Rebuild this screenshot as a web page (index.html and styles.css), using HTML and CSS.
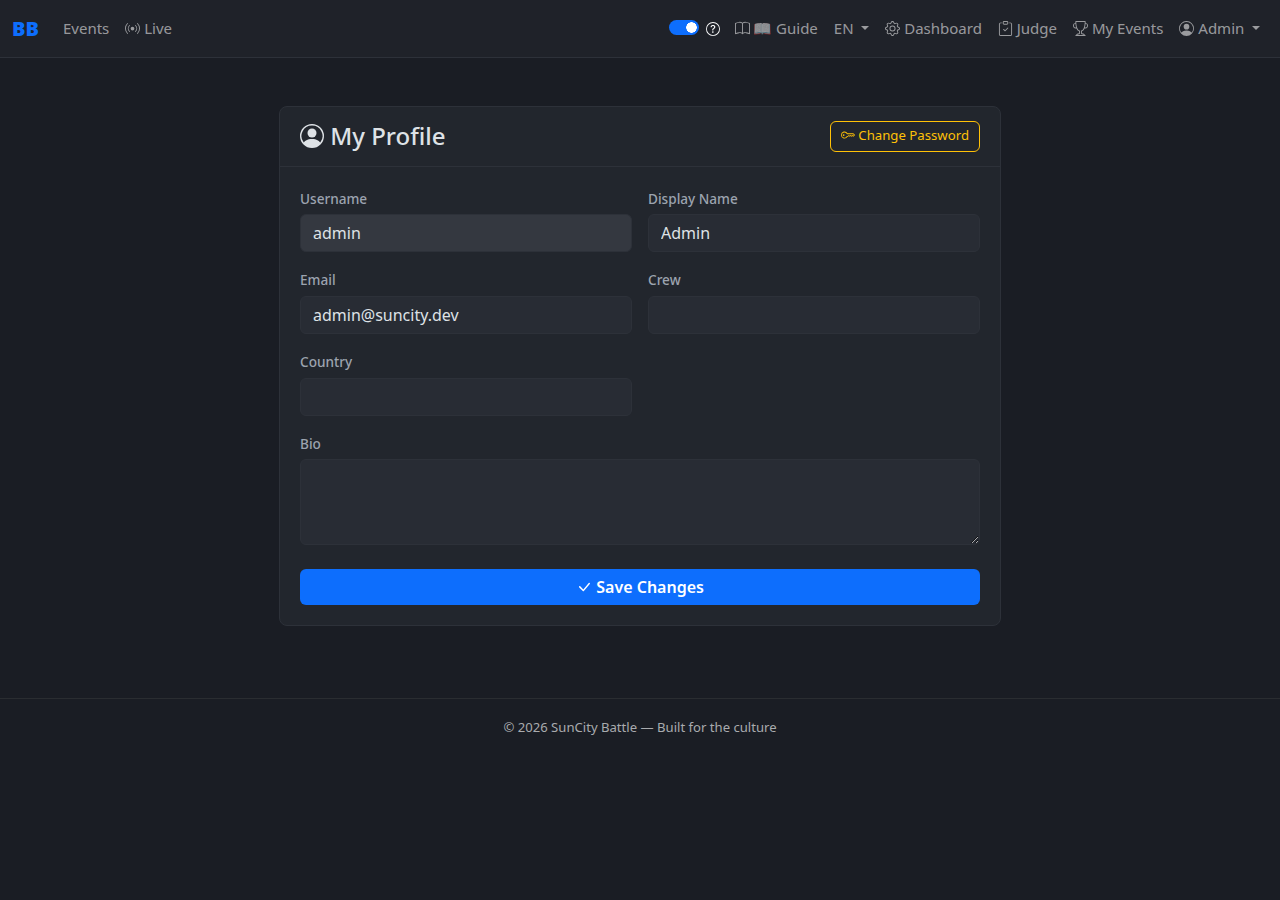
FILE: index.html
```
<!DOCTYPE html>
<html lang="en">
<head>
    <meta charset="UTF-8">
    <meta name="viewport" content="width=device-width, initial-scale=1.0">
    <title>My Profile</title>
    <link rel="stylesheet" href="styles.css">
</head>
<body>

<nav class="navbar">
    <a class="navbar-brand" href="#">BB</a>
    <div class="nav-links">
        <a class="nav-link" href="#">Events</a>
        <a class="nav-link" href="#"><svg class="bi" viewBox="0 0 16 16"><path d="M3.05 3.05a7 7 0 0 0 0 9.9.5.5 0 0 1-.707.707 8 8 0 0 1 0-11.314.5.5 0 0 1 .707.707m2.122 2.122a4 4 0 0 0 0 5.656.5.5 0 1 1-.708.708 5 5 0 0 1 0-7.072.5.5 0 0 1 .708.708m5.656-.708a.5.5 0 0 1 .708 0 5 5 0 0 1 0 7.072.5.5 0 1 1-.708-.708 4 4 0 0 0 0-5.656.5.5 0 0 1 0-.708m2.122-2.12a.5.5 0 0 1 .707 0 8 8 0 0 1 0 11.313.5.5 0 0 1-.707-.707 7 7 0 0 0 0-9.9.5.5 0 0 1 0-.707zM10 8a2 2 0 1 1-4 0 2 2 0 0 1 4 0"/></svg> Live</a>
    </div>

    <div class="nav-links nav-right">
        <div class="help-toggle">
            <input type="checkbox" class="switch" id="helpSwitch" checked>
            <label for="helpSwitch"><svg class="bi" viewBox="0 0 16 16"><path d="M8 15A7 7 0 1 1 8 1a7 7 0 0 1 0 14m0 1A8 8 0 1 0 8 0a8 8 0 0 0 0 16"/><path d="M5.255 5.786a.237.237 0 0 0 .241.247h.825c.138 0 .248-.113.266-.25.09-.656.54-1.134 1.342-1.134.686 0 1.314.343 1.314 1.168 0 .635-.374.927-.965 1.371-.673.489-1.206 1.06-1.168 1.987l.003.217a.25.25 0 0 0 .25.246h.811a.25.25 0 0 0 .25-.25v-.105c0-.718.273-.927 1.01-1.486.609-.463 1.244-.977 1.244-2.056 0-1.511-1.276-2.241-2.673-2.241-1.267 0-2.655.59-2.75 2.286m1.557 5.763c0 .533.425.927 1.01.927.609 0 1.028-.394 1.028-.927 0-.552-.42-.94-1.029-.94-.584 0-1.009.388-1.009.94"/></svg></label>
        </div>
        <a class="nav-link" href="#"><svg class="bi" viewBox="0 0 16 16"><path d="M1 2.828c.885-.37 2.154-.769 3.388-.893 1.33-.134 2.458.063 3.112.752v9.746c-.935-.53-2.12-.603-3.213-.493-1.18.12-2.37.461-3.287.811zm7.5-.141c.654-.689 1.782-.886 3.112-.752 1.234.124 2.503.523 3.388.893v9.923c-.918-.35-2.107-.692-3.287-.81-1.094-.111-2.278-.039-3.213.492zM8 1.783C7.015.936 5.587.81 4.287.94c-1.514.153-3.042.672-3.994 1.105A.5.5 0 0 0 0 2.5v11a.5.5 0 0 0 .707.455c.882-.4 2.303-.881 3.68-1.02 1.409-.142 2.59.087 3.223.877a.5.5 0 0 0 .78 0c.633-.79 1.814-1.019 3.222-.877 1.378.139 2.8.62 3.681 1.02A.5.5 0 0 0 16 13.5v-11a.5.5 0 0 0-.293-.455c-.952-.433-2.48-.952-3.994-1.105C10.413.809 8.985.936 8 1.783"/></svg> 📖 Guide</a>
        <a class="nav-link dropdown-toggle" href="#">EN </a>
        <a class="nav-link" href="#"><svg class="bi" viewBox="0 0 16 16"><path d="M8 4.754a3.246 3.246 0 1 0 0 6.492 3.246 3.246 0 0 0 0-6.492M5.754 8a2.246 2.246 0 1 1 4.492 0 2.246 2.246 0 0 1-4.492 0"/><path d="M9.796 1.343c-.527-1.79-3.065-1.79-3.592 0l-.094.319a.873.873 0 0 1-1.255.52l-.292-.16c-1.64-.892-3.433.902-2.54 2.541l.159.292a.873.873 0 0 1-.52 1.255l-.319.094c-1.79.527-1.79 3.065 0 3.592l.319.094a.873.873 0 0 1 .52 1.255l-.16.292c-.892 1.64.901 3.434 2.541 2.54l.292-.159a.873.873 0 0 1 1.255.52l.094.319c.527 1.79 3.065 1.79 3.592 0l.094-.319a.873.873 0 0 1 1.255-.52l.292.16c1.64.893 3.434-.902 2.54-2.541l-.159-.292a.873.873 0 0 1 .52-1.255l.319-.094c1.79-.527 1.79-3.065 0-3.592l-.319-.094a.873.873 0 0 1-.52-1.255l.16-.292c.893-1.64-.902-3.433-2.541-2.54l-.292.159a.873.873 0 0 1-1.255-.52zm-2.633.283c.246-.835 1.428-.835 1.674 0l.094.319a1.873 1.873 0 0 0 2.693 1.115l.291-.16c.764-.415 1.6.42 1.184 1.185l-.159.292a1.873 1.873 0 0 0 1.116 2.692l.318.094c.835.246.835 1.428 0 1.674l-.319.094a1.873 1.873 0 0 0-1.115 2.693l.16.291c.415.764-.42 1.6-1.185 1.184l-.291-.159a1.873 1.873 0 0 0-2.693 1.116l-.094.318c-.246.835-1.428.835-1.674 0l-.094-.319a1.873 1.873 0 0 0-2.692-1.115l-.292.16c-.764.415-1.6-.42-1.184-1.185l.159-.291A1.873 1.873 0 0 0 1.945 8.93l-.319-.094c-.835-.246-.835-1.428 0-1.674l.319-.094A1.873 1.873 0 0 0 3.06 4.377l-.16-.292c-.415-.764.42-1.6 1.185-1.184l.292.159a1.873 1.873 0 0 0 2.692-1.115z"/></svg> Dashboard</a>
        <a class="nav-link" href="#"><svg class="bi" viewBox="0 0 16 16"><path fill-rule="evenodd" d="M10.854 7.146a.5.5 0 0 1 0 .708l-3 3a.5.5 0 0 1-.708 0l-1.5-1.5a.5.5 0 1 1 .708-.708L7.5 9.793l2.646-2.647a.5.5 0 0 1 .708 0"/><path d="M4 1.5H3a2 2 0 0 0-2 2V14a2 2 0 0 0 2 2h10a2 2 0 0 0 2-2V3.5a2 2 0 0 0-2-2h-1v1h1a1 1 0 0 1 1 1V14a1 1 0 0 1-1 1H3a1 1 0 0 1-1-1V3.5a1 1 0 0 1 1-1h1z"/><path d="M9.5 1a.5.5 0 0 1 .5.5v1a.5.5 0 0 1-.5.5h-3a.5.5 0 0 1-.5-.5v-1a.5.5 0 0 1 .5-.5zm-3-1A1.5 1.5 0 0 0 5 1.5v1A1.5 1.5 0 0 0 6.5 4h3A1.5 1.5 0 0 0 11 2.5v-1A1.5 1.5 0 0 0 9.5 0z"/></svg> Judge</a>
        <a class="nav-link" href="#"><svg class="bi" viewBox="0 0 16 16"><path d="M2.5.5A.5.5 0 0 1 3 0h10a.5.5 0 0 1 .5.5q0 .807-.034 1.536a3 3 0 1 1-1.133 5.89c-.79 1.865-1.878 2.777-2.833 3.011v2.173l1.425.356c.194.048.377.135.537.255L13.3 15.1a.5.5 0 0 1-.3.9H3a.5.5 0 0 1-.3-.9l1.838-1.379c.16-.12.343-.207.537-.255L6.5 13.11v-2.173c-.955-.234-2.043-1.146-2.833-3.012a3 3 0 1 1-1.132-5.89A33 33 0 0 1 2.5.5m.099 2.54a2 2 0 0 0 .72 3.935c-.333-1.05-.588-2.346-.72-3.935m10.083 3.935a2 2 0 0 0 .72-3.935c-.133 1.59-.388 2.885-.72 3.935M3.504 1q.01.775.056 1.469c.13 2.028.457 3.546.87 4.667C5.294 9.48 6.484 10 7 10a.5.5 0 0 1 .5.5v2.61a1 1 0 0 1-.757.97l-1.426.356a.5.5 0 0 0-.179.085L4.5 15h7l-.638-.479a.5.5 0 0 0-.18-.085l-1.425-.356a1 1 0 0 1-.757-.97V10.5A.5.5 0 0 1 9 10c.516 0 1.706-.52 2.57-2.864.413-1.12.74-2.64.87-4.667q.045-.694.056-1.469z"/></svg> My Events</a>
        <a class="nav-link dropdown-toggle" href="#"><svg class="bi" viewBox="0 0 16 16"><path d="M11 6a3 3 0 1 1-6 0 3 3 0 0 1 6 0"/><path fill-rule="evenodd" d="M0 8a8 8 0 1 1 16 0A8 8 0 0 1 0 8m8-7a7 7 0 0 0-5.468 11.37C3.242 11.226 4.805 10 8 10s4.757 1.225 5.468 2.37A7 7 0 0 0 8 1"/></svg> Admin </a>
    </div>
</nav>

<main class="content">
    <div class="card">
        <div class="card-header">
            <h1><svg class="bi" viewBox="0 0 16 16"><path d="M11 6a3 3 0 1 1-6 0 3 3 0 0 1 6 0"/><path fill-rule="evenodd" d="M0 8a8 8 0 1 1 16 0A8 8 0 0 1 0 8m8-7a7 7 0 0 0-5.468 11.37C3.242 11.226 4.805 10 8 10s4.757 1.225 5.468 2.37A7 7 0 0 0 8 1"/></svg> My Profile</h1>
            <a class="btn-password" href="#"><svg class="bi" viewBox="0 0 16 16"><path d="M0 8a4 4 0 0 1 7.465-2H14a.5.5 0 0 1 .354.146l1.5 1.5a.5.5 0 0 1 0 .708l-1.5 1.5a.5.5 0 0 1-.708 0L13 9.207l-.646.647a.5.5 0 0 1-.708 0L11 9.207l-.646.647a.5.5 0 0 1-.708 0L9 9.207l-.646.647A.5.5 0 0 1 8 10h-.535A4 4 0 0 1 0 8m4-3a3 3 0 1 0 2.712 4.285A.5.5 0 0 1 7.163 9h.63l.853-.854a.5.5 0 0 1 .708 0l.646.647.646-.647a.5.5 0 0 1 .708 0l.646.647.646-.647a.5.5 0 0 1 .708 0l.646.647.793-.793-1-1h-6.63a.5.5 0 0 1-.451-.285A3 3 0 0 0 4 5"/><path d="M4 8a1 1 0 1 1-2 0 1 1 0 0 1 2 0"/></svg> Change Password</a>
        </div>

        <form class="card-body">
            <div class="form-grid">
                <div class="field">
                    <label for="username">Username</label>
                    <input type="text" id="username" value="admin" disabled>
                </div>
                <div class="field">
                    <label for="displayName">Display Name</label>
                    <input type="text" id="displayName" value="Admin">
                </div>
                <div class="field">
                    <label for="email">Email</label>
                    <input type="email" id="email" value="admin@suncity.dev">
                </div>
                <div class="field">
                    <label for="crew">Crew</label>
                    <input type="text" id="crew">
                </div>
                <div class="field">
                    <label for="country">Country</label>
                    <input type="text" id="country">
                </div>
                <div class="field field-wide">
                    <label for="bio">Bio</label>
                    <textarea id="bio" rows="3"></textarea>
                </div>
            </div>
            <button type="submit" class="btn-save"><svg class="bi" viewBox="0 0 16 16"><path d="M12.736 3.97a.733.733 0 0 1 1.047 0c.286.289.29.756.01 1.05L7.88 12.01a.733.733 0 0 1-1.065.02L3.217 8.384a.757.757 0 0 1 0-1.06.733.733 0 0 1 1.047 0l3.052 3.093 5.4-6.425z"/></svg> Save Changes</button>
        </form>
    </div>
</main>

<footer>
    <p>© 2026 SunCity Battle — Built for the culture</p>
</footer>

</body>
</html>
```
FILE: styles.css
```
* {
    box-sizing: border-box;
}

body {
    margin: 0;
    font-family: "Noto Sans", "Liberation Sans", "Noto Color Emoji", sans-serif;
    font-size: 16px;
    line-height: 1.5;
    background-color: #1a1d24;
    color: #dee2e6;
}

a {
    text-decoration: none;
}

.bi {
    width: 1em;
    height: 1em;
    fill: currentColor;
    vertical-align: -0.125em;
}

/* Navbar */
.navbar {
    display: flex;
    align-items: center;
    height: 58px;
    padding: 0 12px;
    background-color: #1f2229;
    border-bottom: 1px solid #2d3139;
}

.navbar-brand {
    margin-right: 16px;
    font-size: 20px;
    font-weight: 900;
    color: #0d6efd;
}

.nav-links {
    display: flex;
    align-items: center;
}

.nav-right {
    margin-left: auto;
}

.nav-link {
    padding: 8px;
    font-size: 15px;
    white-space: nowrap;
    color: rgba(255, 255, 255, 0.55);
}

.dropdown-toggle::after {
    content: "";
    display: inline-block;
    margin-left: 0.255em;
    vertical-align: 0.255em;
    border-top: 0.3em solid;
    border-right: 0.3em solid transparent;
    border-left: 0.3em solid transparent;
}

.help-toggle {
    display: flex;
    align-items: center;
    gap: 7px;
    margin-right: 7px;
    font-size: 14px;
    color: #f8f9fa;
}

.switch {
    appearance: none;
    width: 30px;
    height: 15px;
    margin: 0 0 2px;
    border-radius: 15px;
    background: #0d6efd radial-gradient(circle at 22.5px 50%, #fff 5px, transparent 5.5px);
}

/* Profile card */
.content {
    padding: 48px 0 72px;
}

.card {
    width: 722px;
    margin: 0 auto;
    background-color: #22262d;
    border: 1px solid #2d3139;
    border-radius: 8px;
}

.card-header {
    display: flex;
    align-items: center;
    justify-content: space-between;
    height: 60px;
    padding: 0 20px;
    border-bottom: 1px solid #2d3139;
}

.card-header h1 {
    margin: 0;
    font-size: 24px;
    font-weight: 500;
    line-height: 1.2;
}

.btn-password {
    padding: 3px 10px 6px;
    font-size: 13.2px;
    line-height: 20px;
    color: #ffc107;
    border: 1px solid #ffc107;
    border-radius: 6px;
}

.btn-password .bi {
    width: 14px;
    height: 14px;
}

.card-body {
    padding: 19.4px 20px 20px;
}

.form-grid {
    display: grid;
    grid-template-columns: 1fr 1fr;
    gap: 16px;
}

.field {
    display: flex;
    flex-direction: column;
}

.field-wide {
    grid-column: 1 / -1;
}

.field label {
    padding-top: 2.35px;
    margin-bottom: 5px;
    font-size: 13.6px;
    font-weight: 500;
    color: #9ca3af;
}

.field input,
.field textarea {
    height: 38px;
    padding: 6px 12px;
    font: inherit;
    color: #dee2e6;
    background-color: #282c34;
    border: 1px solid #2d3139;
    border-radius: 6px;
}

.field textarea {
    height: 86px;
    resize: vertical;
}

.field input:disabled {
    background-color: #343840;
}

.btn-save {
    display: block;
    width: 100%;
    height: 36px;
    margin-top: 24px;
    padding: 0;
    font: inherit;
    font-weight: 600;
    color: #fff;
    background-color: #0d6efd;
    border: none;
    border-radius: 6px;
}

footer {
    padding: 19px 0;
    border-top: 1px solid #2a2d31;
    text-align: center;
}

footer p {
    margin: 0;
    font-size: 13.12px;
    color: #a9abae;
}
```
